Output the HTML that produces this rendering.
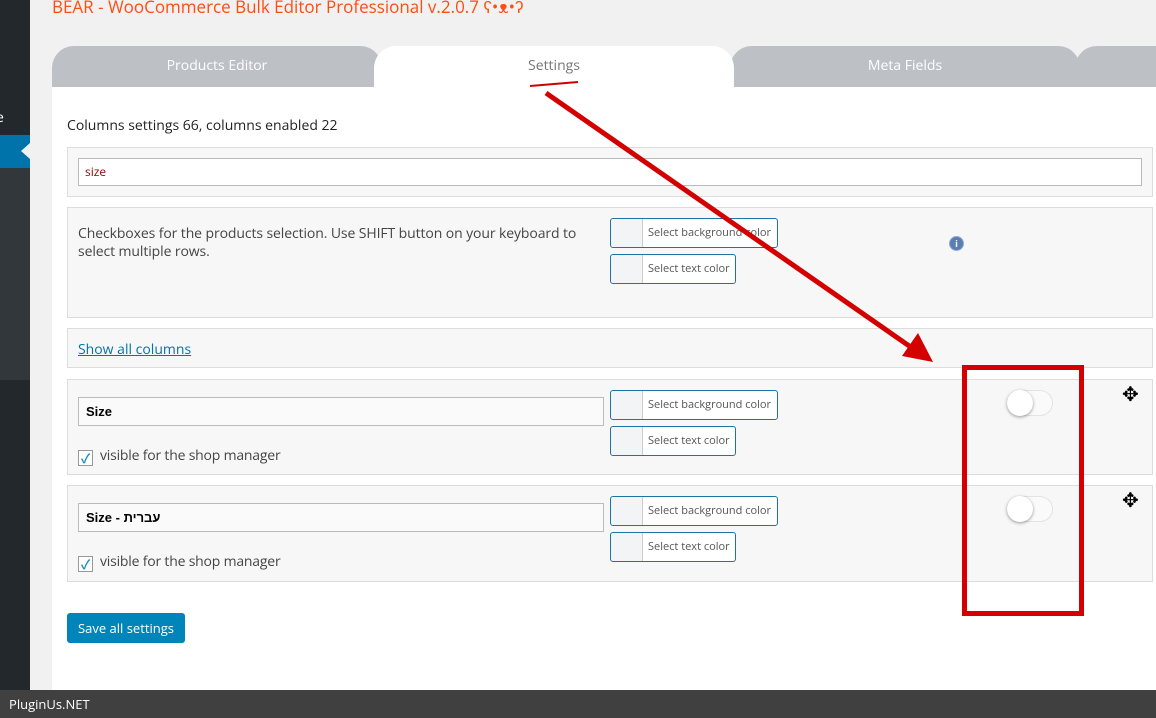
<!DOCTYPE html>
<html><head><meta charset="utf-8"><style>
*{box-sizing:border-box;margin:0;padding:0}
body{width:1156px;height:718px;overflow:hidden;background:#f1f1f1;font-family:"Open Sans","Liberation Sans","Noto Sans CJK JP",sans-serif;position:relative;color:#333}
.abs{position:absolute}
.tab{position:absolute;top:46px;height:41px;background:#bdc1c6;color:#fff;font-size:14px;text-align:center;line-height:40px;border-radius:22px 22px 0 0}
.box{position:absolute;left:67px;width:1086px;background:#f7f7f7;border:1px solid #dcdcdc}
.cbtn{position:absolute;height:30px;border:1px solid #1e73a5;border-radius:3px;background:#fff;font-size:11px;color:#555;line-height:28px;padding-left:37px}
.cbtn:before{content:"";position:absolute;left:0;top:0;width:31px;height:28px;background:#f3f4f6;border-right:1px solid #ccc;border-radius:3px 0 0 3px}
.inp{position:absolute;left:78px;width:526px;height:29px;border:1px solid #bbb;background:#fafafa;font-size:13px;font-weight:bold;color:#000;line-height:27px;padding-left:7px;font-family:"Liberation Sans","DejaVu Sans",sans-serif}
.chk{position:absolute;left:78px;font-size:14px;color:#444;letter-spacing:-0.2px}
.chk span{display:inline-block;width:15px;height:16px;border:1px solid #999;vertical-align:-3px;margin-right:7px;background:#fff;color:#1e8cbe;font-size:13px;line-height:14px;text-align:center;font-weight:bold}
.tog{position:absolute;width:46px;height:26px;border-radius:13px;background:#fafafa;border:1px solid #e3e3e3}
.tog:before{content:"";position:absolute;left:-1px;top:-1px;width:26px;height:26px;border-radius:50%;background:#fff;box-shadow:0 1px 3px rgba(0,0,0,.4)}
</style></head><body>
<div class="abs" style="left:0;top:0;width:30px;height:690px;background:#23282d"></div>
<div class="abs" style="left:0;top:168px;width:30px;height:212px;background:#32373c"></div>
<div class="abs" style="left:0;top:135px;width:30px;height:33px;background:#0073aa"></div>
<div class="abs" style="left:21px;top:143px;width:0;height:0;border-top:8px solid transparent;border-bottom:8px solid transparent;border-right:9px solid #f1f1f1"></div>
<div class="abs" style="left:-4px;top:108px;color:#fff;font-size:14px">e</div>
<div class="abs" style="left:52px;top:-5px;color:#ff4d12;font-size:17px;font-weight:500">BEAR - WooCommerce Bulk Editor Professional v.2.0.7 ʕ•ᴥ•ʔ</div>
<div class="abs" style="left:52px;top:87px;width:1104px;height:603px;background:#fff"></div>
<div class="tab" style="left:52px;width:330px">Products Editor</div>
<div class="tab" style="left:730px;width:350px">Meta Fields</div>
<div class="tab" style="left:1075px;width:120px"></div>
<div class="tab" style="left:374px;width:360px;background:#fff;color:#777">Settings</div>
<div class="abs" style="left:67px;top:116px;font-size:14px;color:#222">Columns settings 66, columns enabled 22</div>
<div class="box" style="top:147px;height:50px"></div>
<div class="abs" style="left:78px;top:158px;width:1064px;height:28px;border:1px solid #bbb;background:#fff;font-size:12px;color:#800;line-height:26px;padding-left:6px">size</div>
<div class="box" style="top:207px;height:111px"></div>
<div class="abs" style="left:78px;top:225px;width:520px;font-size:14px;line-height:18px;color:#444;letter-spacing:-0.1px">Checkboxes for the products selection. Use SHIFT button on your keyboard to select multiple rows.</div>
<div class="cbtn" style="left:610px;top:218px;width:168px">Select background color</div>
<div class="cbtn" style="left:610px;top:254px;width:126px">Select text color</div>
<div class="abs" style="left:949px;top:236px;width:15px;height:15px;border-radius:50%;background:#5b7db6;border:1px solid #94a8cc;color:#fff;font-size:9px;font-weight:bold;text-align:center;line-height:13px">i</div>
<div class="box" style="top:328px;height:40px"></div>
<div class="abs" style="left:78px;top:340px;font-size:14px;color:#0073aa;text-decoration:underline">Show all columns</div>
<div class="box" style="top:379px;height:96px"></div>
<div class="inp" style="top:397px">Size</div>
<div class="chk" style="top:446px"><span>✓</span>visible for the shop manager</div>
<div class="cbtn" style="left:610px;top:390px;width:168px">Select background color</div>
<div class="cbtn" style="left:610px;top:426px;width:126px">Select text color</div>
<div class="tog" style="left:1007px;top:390px"></div>
<div class="abs" style="left:1122px;top:380px;font-size:20px;color:#000">✥</div>
<div class="box" style="top:485px;height:97px"></div>
<div class="inp" style="top:503px">Size - עברית</div>
<div class="chk" style="top:552px"><span>✓</span>visible for the shop manager</div>
<div class="cbtn" style="left:610px;top:496px;width:168px">Select background color</div>
<div class="cbtn" style="left:610px;top:532px;width:126px">Select text color</div>
<div class="tog" style="left:1007px;top:496px"></div>
<div class="abs" style="left:1122px;top:486px;font-size:20px;color:#000">✥</div>
<div class="abs" style="left:67px;top:613px;width:118px;height:30px;background:#0085ba;border-radius:3px;color:#fff;font-size:13px;line-height:30px;text-align:center">Save all settings</div>
<div class="abs" style="left:0;top:690px;width:1156px;height:28px;background:#404040;color:#fff;font-size:13px;line-height:28px;padding-left:9px">PluginUs.NET</div>
<svg class="abs" style="left:0;top:0" width="1156" height="718">
<line x1="530" y1="86" x2="578" y2="82" stroke="#d10000" stroke-width="2"/>
<line x1="546" y1="93" x2="915" y2="350" stroke="#d40000" stroke-width="5"/>
<polygon points="933,362 902,356 918,333" fill="#d40000"/>
<rect x="964.5" y="367.5" width="117" height="246" fill="none" stroke="#d40000" stroke-width="5"/>
</svg>
</body></html>
